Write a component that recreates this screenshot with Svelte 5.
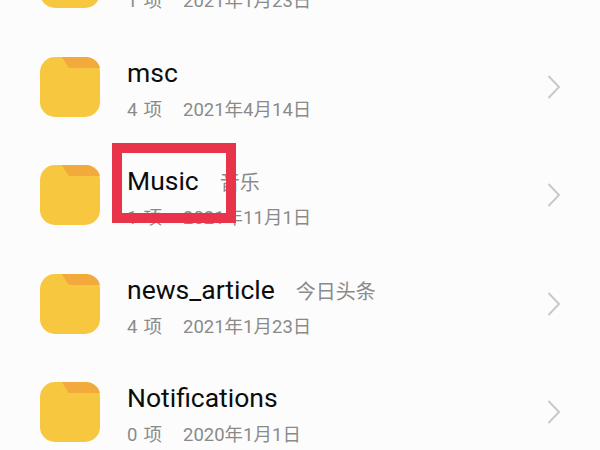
<script lang="ts">
	const folders = [
		{ name: 'Movies', tag: '', count: 1, date: '2021年1月23日' },
		{ name: 'msc', tag: '', count: 4, date: '2021年4月14日' },
		{ name: 'Music', tag: '音乐', count: 1, date: '2021年11月1日' },
		{ name: 'news_article', tag: '今日头条', count: 4, date: '2021年1月23日' },
		{ name: 'Notifications', tag: '', count: 0, date: '2020年1月1日' }
	];
</script>

<div class="screen">
	<ul class="list">
		{#each folders as folder}
			<li class="row">
				<svg class="folder" viewBox="0 0 60 60" width="60" height="60">
					<rect width="60" height="60" rx="15" fill="#f7c83f" />
					<path d="M22 0H45C53 0 58 4 60 11H29C26 7 24 4 22 0Z" fill="#f2aa3d" />
				</svg>
				<div class="info">
					<div class="title">
						<span class="name">{folder.name}</span>
						{#if folder.tag}
							<span class="tag">{folder.tag}</span>
						{/if}
					</div>
					<div class="meta">
						<span class="count">{folder.count} 项</span>
						<span>{folder.date}</span>
					</div>
				</div>
				<svg class="chevron" viewBox="0 0 14 26" width="14" height="26">
					<path d="M1.5 2L12 13L1.5 24" fill="none" stroke="#c9c9c9" stroke-width="2" />
				</svg>
			</li>
		{/each}
	</ul>
	<div class="highlight"></div>
</div>

<style>
	:global(body) {
		margin: 0;
		background: #fcfcfc;
	}

	.screen {
		position: relative;
		width: 600px;
		height: 450px;
		overflow: hidden;
		font-family: Roboto, "Noto Sans CJK SC", sans-serif;
	}

	.list {
		list-style: none;
		margin: -76px 0 0 0;
		padding: 0;
	}

	.row {
		display: flex;
		align-items: center;
		height: 108.5px;
		padding: 0 40px;
		box-sizing: border-box;
	}

	.folder {
		flex-shrink: 0;
	}

	.info {
		flex: 1;
		margin: 5px 0 0 27px;
	}

	.title {
		display: flex;
		align-items: baseline;
		gap: 21px;
		height: 41px;
	}

	.name {
		font-size: 26.5px;
		line-height: 32px;
		color: #0c0c0c;
	}

	.tag {
		font-size: 20px;
		color: #8b8b8b;
	}

	.meta {
		display: flex;
		gap: 21px;
		font-size: 18.5px;
		line-height: 24px;
		color: #8a8a8a;
	}

	.count {
		word-spacing: 1.5px;
	}

	.chevron {
		margin-right: -1px;
		flex-shrink: 0;
	}

	.highlight {
		position: absolute;
		left: 112px;
		top: 143px;
		width: 124px;
		height: 80px;
		box-sizing: border-box;
		border: 10px solid #e7344a;
	}
</style>
